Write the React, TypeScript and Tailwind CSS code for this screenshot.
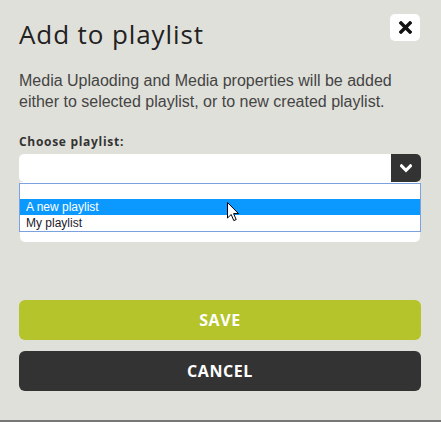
import React from "react";

export default function App() {
  return (
    <div className="w-[441px] h-[422px] bg-[#e0e0da] flex flex-col overflow-hidden relative">
      <div className="flex-1 pl-[19px] pr-[20px]">
        <div className="flex justify-between items-start pt-[14px]">
          <h1 className="mt-[5px] text-[26px] leading-[30px] text-[#222] font-['Open_Sans',sans-serif] font-normal tracking-[0.9px]">
            Add to playlist
          </h1>
          <button className="w-[30px] h-[27px] bg-white rounded-[5px] mr-[1px] flex items-center justify-center">
            <svg width="13" height="13" viewBox="0 0 13 13">
              <path d="M2 2 L11 11 M11 2 L2 11" stroke="#111" strokeWidth="3.4" strokeLinecap="square" />
            </svg>
          </button>
        </div>
        <p className="mt-[21px] w-[385px] text-[16px] leading-[21px] text-[#444] font-['Liberation_Sans',Arial,sans-serif]">
          Media Uplaoding and Media properties will be added either to selected playlist, or to new created playlist.
        </p>
        <div className="mt-[22px] text-[12px] leading-[16px] font-bold text-[#333] font-['Open_Sans',sans-serif] tracking-[0.7px]">
          Choose playlist:
        </div>
        <div className="mt-[4px] relative">
          <div className="h-[28px] bg-white rounded-[5px] flex justify-end">
            <div className="w-[30px] h-[28px] bg-[#333] rounded-r-[5px] flex items-center justify-center">
              <svg width="12" height="9" viewBox="0 0 12 9">
                <path d="M1.5 1.8 L6 6.3 L10.5 1.8" stroke="white" strokeWidth="3" fill="none" strokeLinecap="square" />
              </svg>
            </div>
          </div>
          <div className="h-[60px] bg-white rounded-b-[5px] mx-[1px]" />
          <div className="absolute left-0 right-0 top-[29px] border border-[#7ba2dc] bg-white font-['Liberation_Sans',Arial,sans-serif] text-[12px]">
            <div className="h-[15px]" />
            <div className="h-[16px] bg-[#0b99ff] text-white pl-[6px] leading-[16px]">A new playlist</div>
            <div className="h-[16px] text-[#1a1a2a] pl-[6px] leading-[16px]">My playlist</div>
          </div>
          <svg className="absolute left-[208px] top-[48px]" width="13" height="20" viewBox="0 0 13 20">
            <path d="M0.5 0.5 L0.5 16 L4.2 12.5 L6.8 18.6 L9.2 17.6 L6.6 11.6 L11.5 11.6 Z" fill="white" stroke="black" strokeWidth="1" strokeLinejoin="miter" />
          </svg>
        </div>
        <button className="mt-[58px] w-full h-[40px] bg-[#b5c42a] rounded-[6px] text-white font-bold text-[16px] tracking-[0.6px] font-['Open_Sans',sans-serif] flex items-center justify-center">
          SAVE
        </button>
        <button className="mt-[11px] w-full h-[40px] bg-[#333] rounded-[6px] text-white font-bold text-[16px] tracking-[0.6px] font-['Open_Sans',sans-serif] flex items-center justify-center">
          CANCEL
        </button>
      </div>
      <div className="h-[2px] bg-[#777]" />
    </div>
  );
}
